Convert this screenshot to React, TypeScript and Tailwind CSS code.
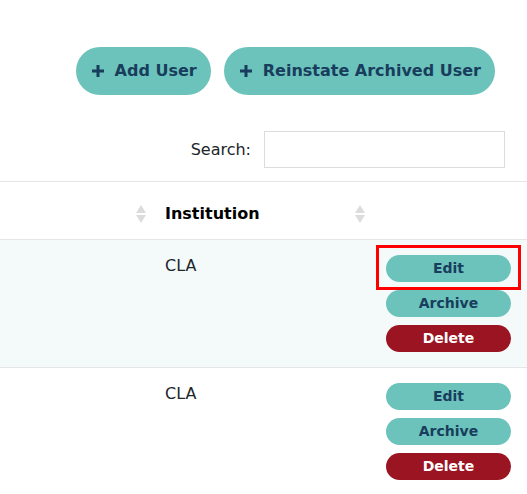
import React from 'react';

function SortIcon() {
    return (
        <svg width="12" height="20" viewBox="0 0 12 20" className="shrink-0">
            <path d="M6 1 L11 9 H1 Z" fill="#dcdcdc" />
            <path d="M6 19 L11 11 H1 Z" fill="#dcdcdc" />
        </svg>
    );
}

function Plus() {
    return (
        <svg width="14" height="14" viewBox="0 0 14 14" className="shrink-0">
            <path d="M7 1 V13 M1 7 H13" stroke="#183d5d" strokeWidth="3" />
        </svg>
    );
}

function Actions({ highlight }: { highlight?: boolean }) {
    return (
        <div className="flex flex-col items-start gap-[8px] pl-[11px]">
            <div className="relative">
                {highlight && (
                    <span className="absolute -left-[10px] -top-[10px] -right-[10px] -bottom-[8px] border-[3px] border-[#ff0000]"></span>
                )}
                <button className="w-[125px] h-[27px] rounded-full bg-[#6cc3bb] text-[#183d5d] text-[14px] font-bold">
                    Edit
                </button>
            </div>
            <button className="w-[125px] h-[27px] rounded-full bg-[#6cc3bb] text-[#183d5d] text-[14px] font-bold">
                Archive
            </button>
            <button className="w-[125px] h-[27px] rounded-full bg-[#9a1421] text-white text-[14px] font-bold">
                Delete
            </button>
        </div>
    );
}

export default function App() {
    return (
        <div className="w-[527px] h-[494px] overflow-hidden bg-white text-[#212529]" style={{ fontFamily: '"DejaVu Sans", sans-serif' }}>
            {/* TOOLBAR */}
            <div className="flex justify-end gap-[13px] pt-[47px] pr-[32px]">
                <button className="h-[48px] pl-[15px] pr-[14px] rounded-full bg-[#6cc3bb] text-[#183d5d] text-[16px] font-bold flex items-center gap-[10px]">
                    <Plus />
                    Add User
                </button>
                <button className="h-[48px] pl-[15px] pr-[14px] rounded-full bg-[#6cc3bb] text-[#183d5d] text-[16px] font-bold flex items-center gap-[10px]">
                    <Plus />
                    Reinstate Archived User
                </button>
            </div>

            {/* SEARCH */}
            <div className="flex justify-end items-center gap-[13px] pt-[36px] pr-[22px]">
                <label className="text-[16px] text-[#212529]">Search:</label>
                <input className="w-[241px] h-[37px] border border-[#dcdcdc] outline-none" />
            </div>

            {/* TABLE */}
            <div className="mt-[13px] border-t border-[#e6e6e6]">
                <div className="grid grid-cols-[165px_210px_1fr] h-[58px] items-center pt-[6px] border-b border-[#e6e6e6]">
                    <div className="flex justify-end pr-[18px]">
                        <SortIcon />
                    </div>
                    <div className="flex items-center justify-between pr-[9px]">
                        <span className="text-[16px] font-bold text-black">Institution</span>
                        <SortIcon />
                    </div>
                    <div />
                </div>

                <div className="grid grid-cols-[165px_210px_1fr] h-[128px] bg-[#f4f9f9] border-b border-[#e6e6e6]">
                    <div />
                    <div className="pt-[14px] text-[16px]">CLA</div>
                    <div className="pt-[15px]">
                        <Actions highlight />
                    </div>
                </div>

                <div className="grid grid-cols-[165px_210px_1fr] h-[128px]">
                    <div />
                    <div className="pt-[14px] text-[16px]">CLA</div>
                    <div className="pt-[15px]">
                        <Actions />
                    </div>
                </div>
            </div>
        </div>
    );
}
